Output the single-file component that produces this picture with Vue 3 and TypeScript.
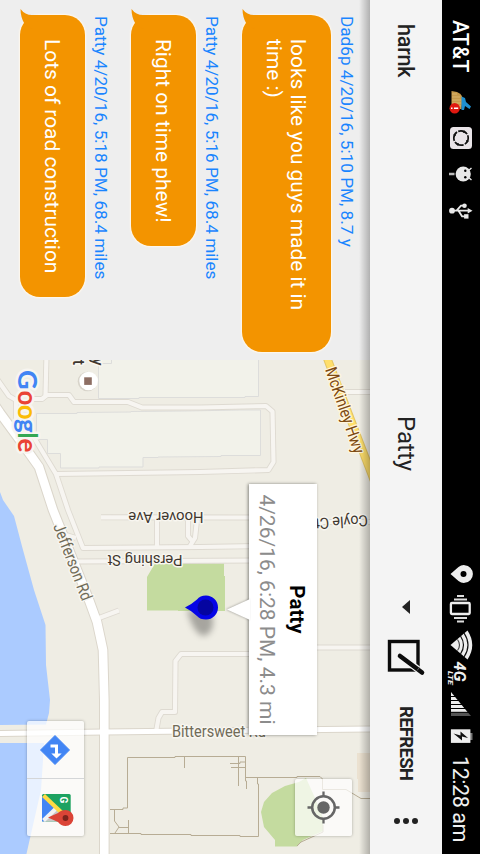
<script setup lang="ts">
interface Message {
  id: number
  meta: string
  lines: string[]
  width: number
}

const messages: Message[] = [
  { id: 1, meta: 'Dad6p 4/20/16, 5:10 PM, 8.7 y', lines: ['looks like you guys made it in', 'time :)'], width: 337 },
  { id: 2, meta: 'Patty 4/20/16, 5:16 PM, 68.4 miles', lines: ['Right on time phew!'], width: 231 },
  { id: 3, meta: 'Patty 4/20/16, 5:18 PM, 68.4 miles', lines: ['Lots of road construction'], width: 282 },
]

const minorRoads: string[] = [
  'M34 399H42L47 395H69L74 402H128L142 407.5H200L266 406L272.5 411.5L273.5 462L268.5 470L200 472L56 474',
  'M46.5 355L45.5 395',
  'M-3 379L9 396L16 400V420',
  'M30 431L56 474L68 510L83 548L200 547L260 546',
  'M66 535L76 538',
  'M76 561.5L260 560.5',
  'M101 517.3L260 517.5',
  'M310 522H375',
  'M157 517V547',
  'M188 519V536L193 542',
  'M197 520L195 538L190 546',
  'M99 618L119 610.5',
  'M260 654H181L175.500 661L175 712H162L158.500 718L156 732',
  'M310 647.5H375',
  'M345 392H375',
]

const mainRoads: { d: string; w: number }[] = [
  { d: 'M-3 733.500L104 732L375 729', w: 5 },
  { d: 'M-6 404L0 413L22 443L39 467L53 510L89 600L97 622L103 650L104.300 700V860', w: 8.6 },
]

const fences: string[] = [
  'M110 809.500H123V808H127.500V757.500H175V756.500H245.500V781H246.500V789',
  'M184.500 757V768M238.500 757V786M230 763.500H240V762H245M231 767.500H245',
  'M245.500 777.500H297V776.500H320L322.500 779V789.500H346L361 798.500H372',
  'M257.500 778V784H258.500V836.500H240V835.500H191V834.500H141V833.500H110',
  'M114.500 810V821L119 827L115 833M119 827.500H128.500M128.500 820V833',
  'M297 846L301 842L323 832V825',
]
</script>

<template>
  <div class="viewport">
    <div class="device">
      <header class="status">
        <span class="carrier">AT&amp;T</span>
        <svg width="34" height="38" viewBox="86 0 34 38">
          <path d="M91 28.500L92 23Q94 18 98 17.500L109 18.500V28.500Z" fill="#c79a4b" />
          <path d="M94 28V23M97 28V20M100 28V19M103 28V19M106 28V19" stroke="#e0bd77" stroke-width=".8" />
          <path d="M96.500 18.500L98 15L102 14L106.500 9L109 10.500L106 15L110 16V18.500Z" fill="#1e8fd0" />
          <circle cx="108.300" cy="25.300" r="5.200" fill="#e01810" />
          <path d="M108.300 21.800V26M108.300 27.500V29" stroke="#fff" stroke-width="1.500" />
        </svg>
        <svg width="36" height="38" viewBox="120 0 36 38">
          <rect x="127" y="8" width="22" height="22" rx="3.500" fill="#e9e4e8" />
          <circle cx="138" cy="19" r="7.200" fill="none" stroke="#111" stroke-width="1.700" stroke-dasharray="10 1.310" stroke-dashoffset="3" />
          <path d="M130 16l2.500-2 .5 3ZM146 22l-2.500 2-.5-3ZM141 11l2 2.500-3 .5ZM135 27l-2-2.500 3-.5Z" fill="#111" />
        </svg>
        <svg width="36" height="38" viewBox="156 0 36 38">
          <path d="M168 8.500L171 12M180 8.500L177 12" stroke="#e8e8e8" stroke-width="1.400" />
          <circle cx="174" cy="16.800" r="7.600" fill="#e8e8e8" />
          <circle cx="170.700" cy="14.700" r="1.200" />
          <circle cx="177.300" cy="14.700" r="1.200" />
          <path d="M174 25.500V31" stroke="#bbb" stroke-width="2.600" />
        </svg>
        <svg width="38" height="38" viewBox="192 0 38 38">
          <g fill="none" stroke="#e8e8e8" stroke-width="1.800">
            <path d="M210.700 10V28M205.700 16V19L210.700 23.500M216.300 14V18L210.700 21.500" />
          </g>
          <g fill="#e8e8e8">
            <circle cx="210.700" cy="28" r="2.900" />
            <path d="M210.700 7.500L213.500 12.300H207.900Z" />
            <circle cx="205.700" cy="15.500" r="2.300" />
            <rect x="214.200" y="11.500" width="4.400" height="4.400" />
          </g>
        </svg>
        <span class="spacer"></span>
        <svg width="28" height="38" viewBox="560 0 28 38">
          <path d="M574 29.500L567 21.500A8.900 8.900 0 1 1 581 21.500Z" fill="#eee" />
          <circle cx="574" cy="16.500" r="3" />
        </svg>
        <svg width="40" height="38" viewBox="588 0 40 38">
          <rect x="603" y="10.300" width="11" height="18.800" rx="1" fill="none" stroke="#eee" stroke-width="2.300" />
          <path d="M599.600 13V26M617.900 13V26M595.900 16V23M621.500 16V23" stroke="#ddd" stroke-width="2" />
        </svg>
        <svg width="33" height="38" viewBox="628 0 33 38">
          <path d="M645 29.500L630.500 12.500Q645 3 659.500 12.500Z" fill="#eee" />
          <path d="M633 16Q645 8 657 16M636 19.500Q645 13.500 654 19.500" fill="none" stroke="#111" stroke-width="1.200" />
          <path d="M639.500 22.500Q645 18.500 650.500 22.500" fill="none" stroke="#444" stroke-width="1.100" />
        </svg>
        <svg width="27" height="38" viewBox="661 0 27 38">
          <text class="net" x="661.500" y="26" textLength="20" lengthAdjust="spacingAndGlyphs">4G</text>
          <text class="lte" x="671" y="32" textLength="14" lengthAdjust="spacingAndGlyphs">LTE</text>
        </svg>
        <svg width="34" height="38" viewBox="688 0 34 38">
          <path d="M692 29L712 12.500V29Z" fill="#eee" />
          <path d="M712 12.500L716 9V29H712Z" fill="#555" />
          <path d="M696.500 9V30M700.500 9V30M704.500 9V30M708.500 9V30M712.300 9V30" stroke="#000" stroke-width="1" />
        </svg>
        <svg width="34" height="38" viewBox="722 0 34 38">
          <rect x="733" y="7.500" width="7" height="3" fill="#777" />
          <rect x="729.300" y="9.600" width="13.600" height="19.500" fill="#eee" />
          <path d="M738 12L731.500 19.500H735.500L733.500 26.500L740.500 18H736.500Z" fill="#111" />
        </svg>
        <span class="clock">12:28 am</span>
      </header>

      <nav class="toolbar">
        <span class="account">harnk</span>
        <div class="picker">
          <span class="picked">Patty</span>
          <svg width="14" height="8" viewBox="0 0 14 8"><path d="M0 0H14L7 8Z" fill="#222" /></svg>
        </div>
        <svg class="compose" width="42" height="72" viewBox="636 38 42 72">
          <rect x="641.500" y="62" width="28.500" height="28.500" fill="none" stroke="#0c0c0c" stroke-width="3.400" />
          <path d="M655.500 80.500L672 58.500" stroke="#f4f4f4" stroke-width="7" />
          <path d="M656 80L672.500 58" stroke="#0c0c0c" stroke-width="4.600" stroke-linecap="round" />
          <path d="M670.500 63L667.500 60.500" stroke="#777" stroke-width=".8" />
        </svg>
        <span class="refresh">REFRESH</span>
        <svg class="more" width="6" height="24" viewBox="0 0 6 24" fill="#222">
          <circle cx="3" cy="3" r="3" /><circle cx="3" cy="12" r="3" /><circle cx="3" cy="21" r="3" />
        </svg>
      </nav>

      <main class="content">
        <section class="chat">
          <article v-for="m in messages" :key="m.id" class="message">
            <div class="meta">{{ m.meta }}</div>
            <div class="bubble" :style="{ width: m.width + 'px' }">
              <svg class="tail" width="20" height="22" viewBox="0 0 20 22">
                <path d="M6 0V10Q6 17 0 21.500Q8 21.500 15 17.500L20 10Z" fill="#f39400" />
              </svg>
              <div v-for="line in m.lines" :key="line" class="line">{{ line }}</div>
            </div>
          </article>
        </section>

        <section class="map">
          <svg class="canvas" width="494" height="370" viewBox="0 0 494 370">
            <g transform="matrix(0 -1 1 0 -360 370)">
              <path d="M0 492L3 500L14 516L23 550L34 590L45.500 625L46 665L50 700L49 713L46 724.500L-2 725V488ZM-2 743H44L43 760L41 790L33 825L26 856H-2Z" fill="#abcbff" />
              <path d="M155 563.500H224V576H225V611H178V610.500H147V577Z" fill="#c4db9f" />
              <path d="M306 778L299 782L285 786L272 793L264 802L261 812L264 827L275 840V846.500H297L303 840L323 831V818L315 798Z" fill="#c4db9f" />
              <path d="M357 753H372V792H358V779H357Z" fill="#ebe1d0" />
              <g fill="#f2f2ea" stroke="#dddddb">
                <path d="M98.500 355V398.500H139V397.500H245V396.500H258.500V355Z" />
                <path d="M36.500 413.500L77 413.500V412.500L131 412V411.500L185 411L240 410H260.500V455.500H221V456.500L158 457V457.500H143V467H99V468H60.500V453.500H47.500V439.500H36.500Z" />
                <path d="M102 363.500H111.500V358" fill="none" />
              </g>
              <g fill="none" stroke-linejoin="round">
                <path v-for="d in minorRoads" :key="'c' + d" :d="d" stroke="#dedad1" stroke-width="6" />
                <path v-for="r in mainRoads" :key="'c' + r.d" :d="r.d" stroke="#dbd6cb" :stroke-width="r.w + 2" />
                <path v-for="d in minorRoads" :key="d" :d="d" stroke="#f7f5f1" stroke-width="4.200" />
                <path v-for="r in mainRoads" :key="r.d" :d="r.d" stroke="#fff" :stroke-width="r.w" />
                <path d="M324 350L375 483" stroke="#e3c564" stroke-width="8.500" />
                <path d="M324 350L375 483" stroke="#ffdf6b" stroke-width="6.500" />
                <path v-for="d in fences" :key="d" :d="d" stroke="#b7ac94" />
              </g>
              <g class="labels">
                <text class="hwy" transform="translate(325 369.500) rotate(71)" textLength="90" lengthAdjust="spacingAndGlyphs">McKinley Hwy</text>
                <text transform="translate(53 526) rotate(69)" textLength="81" lengthAdjust="spacingAndGlyphs" class="street">Jefferson Rd</text>
                <text transform="translate(203.500 511.500) rotate(180)" textLength="75" lengthAdjust="spacingAndGlyphs">Hoover Ave</text>
                <text transform="translate(182.500 555) rotate(180)" textLength="75" lengthAdjust="spacingAndGlyphs">Pershing St</text>
                <text transform="translate(367.500 515) rotate(176.500)" textLength="53" lengthAdjust="spacingAndGlyphs">Coyle Ct</text>
                <text class="street" x="172" y="737" textLength="94" lengthAdjust="spacingAndGlyphs">Bittersweet Rd</text>
                <text class="poi" transform="translate(91.500 365.500) rotate(90)">y</text>
                <text class="poi" transform="translate(72.500 365) rotate(90)">t</text>
              </g>
              <circle cx="87.500" cy="381.500" r="9.800" fill="#d8d4ca" />
              <circle cx="88.600" cy="381" r="9.300" fill="#fff" />
              <rect x="84.200" y="377.300" width="7.600" height="7.600" fill="#8d6e63" />
              <g class="shadow">
                <path d="M187 609L212 614Q216 632 204 636Q193 634 187 609Z" fill="#000" opacity=".3" />
              </g>
              <path d="M185 607.500Q192 604 197 599.500Q200 595.500 206 595.500A12 12 0 0 1 206 619.500Q200 619.500 197 616Q192 611 185 607.500Z" fill="#0505e6" />
              <circle cx="205.500" cy="607.500" r="8" fill="#0505a0" />
            </g>
            <g class="google">
              <text y="352"><tspan x="10" class="cap">G</tspan><tspan x="30.500">o</tspan><tspan x="44.800">o</tspan><tspan x="59">g</tspan><tspan x="72.200">l</tspan><tspan x="78.500">e</tspan></text>
              <text y="352" class="tint"><tspan x="10" class="cap" fill="#4285f4">G</tspan><tspan x="30.500" fill="#ea4335">o</tspan><tspan x="44.800" fill="#fbbc05">o</tspan><tspan x="59" fill="#4285f4">g</tspan><tspan x="72.200" fill="#34a853">l</tspan><tspan x="78.500" fill="#ea4335">e</tspan></text>
            </g>
          </svg>

          <div class="info">
            <strong>Patty</strong>
            <span>4/26/16, 6:28 PM, 4.3 mi</span>
            <svg class="pointer" width="22" height="23" viewBox="0 0 22 23"><path d="M0 0H21L10.500 23Z" fill="#fff" /></svg>
          </div>

          <div class="control locate">
            <svg width="57" height="57" viewBox="0 0 57 57">
              <circle cx="28.500" cy="28.500" r="11.300" fill="none" stroke="#666" stroke-width="2.500" />
              <circle cx="28.500" cy="28.500" r="6.200" fill="#666" />
              <path d="M28.500 12.500V17M28.500 40V44.500M12.500 28.500H17M40 28.500H44.500" stroke="#666" stroke-width="2.300" />
            </svg>
          </div>
          <div class="control links">
            <svg width="57" height="57" viewBox="0 0 57 57">
              <g transform="matrix(0 -1 1 0 -721 84)">
                <path d="M55 735.500L69.500 750L55 764.500L40.500 750Z" fill="#4285f4" stroke="#4285f4" stroke-linejoin="round" />
                <path d="M50.500 746H56.500V754.500" fill="none" stroke="#fff" stroke-width="3" />
                <path d="M51.300 753.500H61.700L56.500 758.500Z" fill="#fff" />
              </g>
            </svg>
            <svg width="57" height="57" viewBox="0 0 57 57">
              <g transform="matrix(0 -1 1 0 -779 84)">
                <rect x="42" y="794" width="28.700" height="27.500" rx="1.500" fill="#1da261" />
                <path d="M42 796L58 811L45 821.500H42Z" fill="#4285f4" />
                <path d="M43 821.500L56 807L70.700 821.500Z" fill="#c8c8c8" />
                <path d="M43.500 820.500L56 808.500" stroke="#f3f3f3" stroke-width="4" />
                <path d="M43.500 795.500L62 813" stroke="#ffda44" stroke-width="4.200" />
                <path d="M48 817.500L58 813Q61 810 65.500 810A8 8 0 0 1 65.500 826Q61 826 58 822Z" fill="#db4437" />
                <circle cx="65.500" cy="818" r="2.900" fill="#7b231c" />
                <text class="mini" transform="translate(60 796.500) rotate(90)">G</text>
              </g>
            </svg>
          </div>
        </section>
        <div class="drop"></div>
      </main>
    </div>
  </div>
</template>

<style>
body { background: #000; }
</style>

<style scoped>
.viewport { width: 480px; height: 854px; overflow: hidden; }
.device {
  width: 854px;
  height: 480px;
  display: flex;
  flex-direction: column;
  transform-origin: 0 0;
  transform: translateX(480px) rotate(90deg);
  font-family: Roboto, "Liberation Sans", sans-serif;
  white-space: nowrap;
}
svg { display: block; flex: none; }

.status { height: 38px; flex: none; display: flex; background: #000; color: #f0f0f0; line-height: 39px; }
.carrier { width: 66px; padding-left: 20px; font-size: 21.300px; font-weight: 500; color: #fff; }
.spacer { flex: 1; }
.clock { width: 98px; font-size: 21.500px; letter-spacing: -0.450px; }
.net { font: italic 700 17px Roboto, sans-serif; fill: #eee; }
.lte { font: italic 700 7.500px Roboto, sans-serif; fill: #eee; }

.toolbar { height: 72px; flex: none; display: flex; align-items: center; background: #f4f4f4; color: #222; }
.account { width: 392px; padding-left: 24px; font-size: 21.500px; font-weight: 500; letter-spacing: -0.200px; }
.picker { width: 198px; display: flex; align-items: center; justify-content: space-between; }
.picked { font-size: 24px; }
.compose { margin-left: 22px; }
.refresh { width: 85px; margin-left: 28px; font-size: 18.500px; font-weight: 700; letter-spacing: -0.700px; }
.more { margin-left: 27px; }

.content { position: relative; height: 370px; display: flex; overflow: hidden; }
.chat { width: 360px; flex: none; background: #eee; }
.meta { height: 46px; padding-left: 16px; line-height: 60px; font-size: 17.170px; color: #1a85ff; }
.message:first-child .meta { height: 39px; line-height: 46px; }
.bubble {
  position: relative;
  box-sizing: border-box;
  margin-left: 15px;
  padding: 21px 0 20px 24px;
  border-radius: 20px;
  background: #f39400;
  box-shadow: 0 0 1.500px 0.500px #fff8ec;
  color: #fff;
}
.tail { position: absolute; left: -6px; bottom: 0; }
.line { height: 24px; line-height: 24px; font-size: 20.900px; }

.map { position: relative; width: 494px; background: #efede4; overflow: hidden; }
.labels { font: 400 15.500px Roboto, sans-serif; fill: #3e362f; stroke: #f8f6f0; stroke-width: 3px; stroke-linejoin: round; paint-order: stroke; }
.labels .street { fill: #706b58; font-weight: 400; font-size: 16.500px; }
.labels .hwy { fill: #7d4a12; font-weight: 400; font-size: 16.500px; stroke: #fff5dc; }
.labels .poi { font-size: 16px; font-weight: 500; text-anchor: end; }
.shadow { filter: blur(3px); }
.google { font: 700 26px Lato, sans-serif; fill: #fff; stroke: #f7f5f0; stroke-width: 5px; stroke-linejoin: round; }
.google .cap { font-size: 27px; font-weight: 700; }
.google .tint { stroke: none; }

.info {
  position: absolute;
  left: 124px;
  top: 53px;
  width: 251px;
  height: 68px;
  display: flex;
  flex-direction: column;
  align-items: center;
  background: #fff;
  box-shadow: 0 1px 3px rgba(0, 0, 0, 0.450);
}
.info strong { margin-top: 6px; height: 28px; line-height: 28px; font-size: 20.500px; font-weight: 700; color: #000; }
.info span { height: 32px; line-height: 32px; font-size: 21px; color: #8c8c8c; }
.pointer { position: absolute; left: 115px; top: 67px; filter: drop-shadow(0 1px 1px rgba(0, 0, 0, 0.300)); }

.control { position: absolute; display: flex; background: rgba(255, 255, 255, 0.720); border-radius: 2px; box-shadow: 0 0 3px rgba(0, 0, 0, 0.300); }
.locate { left: 419px; top: 18px; }
.links { left: 361px; top: 286px; }
.links svg + svg { border-left: 1px solid #d4d6d8; }

.drop { position: absolute; left: 0; right: 0; top: 0; height: 11px; background: linear-gradient(rgba(0, 0, 0, 0.260), rgba(0, 0, 0, 0)); }
.mini { font: 700 10px Roboto, sans-serif; fill: #fff; }
</style>
